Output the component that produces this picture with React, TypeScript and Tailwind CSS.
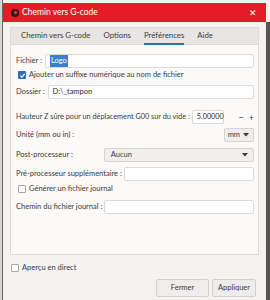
import React from 'react';

const Box = ({ className = '', children }: { className?: string; children?: React.ReactNode }) => (
  <div className={`h-[14px] bg-white border border-[#dcdad8] rounded-[2px] flex items-center px-[4px] ${className}`}>
    {children}
  </div>
);

const Check = ({ checked }: { checked?: boolean }) =>
  checked ? (
    <span className="w-[8px] h-[8px] rounded-[1px] bg-[#2f6fbf] flex items-center justify-center shrink-0">
      <svg width="7" height="7" viewBox="0 0 10 10">
        <path d="M2 5.2 L4.2 7.4 L8.2 2.8" stroke="white" strokeWidth="1.6" fill="none" />
      </svg>
    </span>
  ) : (
    <span className="w-[8px] h-[8px] rounded-[1px] bg-white border border-[#a9a7a5] shrink-0" />
  );

const Arrow = () => (
  <svg width="6" height="4" viewBox="0 0 6 4">
    <path d="M0 0 L6 0 L3 3.5 Z" fill="#3c3c3c" />
  </svg>
);

export default function App() {
  return (
    <div
      className="w-[270px] h-[300px] overflow-hidden flex bg-[#f4f2f0] text-[#3a3a3a] text-[7.5px] whitespace-nowrap"
      style={{ fontFamily: 'Lato, "Noto Sans", sans-serif' }}
    >
      <div className="w-[3px] h-full bg-[#d8d4d0] border-r border-[#6b6460]" />
      <div className="w-[263px] h-full flex flex-col mt-[3px] bg-[#f5f3f1]">
        {/* title bar */}
        <div className="h-[19px] bg-[#e61b27] flex items-center pl-[8px] pr-[9px] text-white">
          <span className="w-[8px] h-[8px] rounded-full bg-[#2a1a1a] flex items-center justify-center mr-[3px]">
            <span className="w-[3px] h-[3px] bg-[#e04040] rotate-45" />
          </span>
          <span className="text-[8.5px]">Chemin vers G-code</span>
          <span className="ml-auto text-[9px] leading-none font-light">✕</span>
        </div>

        <div className="px-[7px] pt-[5px] flex flex-col flex-1">
          {/* tabs */}
          <div className="h-[17px] bg-[#e8e6e4] flex items-center pl-[10px] gap-[13px] text-[7.8px] border-t border-x border-[#dedcda]">
            <span>Chemin vers G-code</span>
            <span>Options</span>
            <span className="relative text-[#3a3a3a]">
              Préférences
              <span className="absolute left-0 right-0 -bottom-[3px] h-[1.5px] bg-[#2f6fbf]" />
            </span>
            <span>Aide</span>
          </div>

          {/* panel */}
          <div className="h-[211px] bg-[#fbfaf9] border border-[#dcdad8] pl-[5px] pr-[4px] pt-[9px] flex flex-col">
            <div className="flex items-center gap-[3px] h-[14px]">
              <span>Fichier :</span>
              <Box className="flex-1 border-[#4a90c8]">
                <span className="bg-[#3a7fd0] text-white px-[1px]">Logo</span>
              </Box>
            </div>
            <div className="flex items-center gap-[3px] h-[14px] pl-[2px]">
              <Check checked />
              <span>Ajouter un suffixe numérique au nom de fichier</span>
            </div>
            <div className="flex items-center gap-[3px] h-[14px] mt-[3px]">
              <span>Dossier :</span>
              <Box className="flex-1">
                <span className="text-[#2a2a2a]">D:\_tampon</span>
              </Box>
            </div>
            <div className="flex items-center h-[14px] mt-[11px] text-[7.3px]">
              <span>Hauteur Z sûre pour un déplacement G00 sur du vide :</span>
              <Box className="ml-[2px] w-[32px] px-[2px]">
                <span className="text-[#2a2a2a]">5.00000</span>
              </Box>
              <span className="ml-auto text-[9px] leading-none mr-[3px]">−</span>
              <span className="ml-[2px] text-[9px] leading-none">+</span>
            </div>
            <div className="flex items-center h-[14px] mt-[4px]">
              <span>Unité (mm ou in) :</span>
              <div className="ml-auto h-[14px] w-[30px] bg-[#f1efed] border border-[#d6d4d2] rounded-[2px] flex items-center justify-end gap-[3px] pr-[4px]">
                <span>mm</span>
                <Arrow />
              </div>
            </div>
            <div className="flex items-center h-[14px] mt-[6px]">
              <span>Post-processeur :</span>
              <div className="ml-[31px] flex-1 h-[14px] bg-[#f1efed] border border-[#d6d4d2] rounded-[2px] flex items-center pl-[6px] pr-[5px]">
                <span>Aucun</span>
                <span className="ml-auto">
                  <Arrow />
                </span>
              </div>
            </div>
            <div className="flex items-center h-[14px] mt-[5px]">
              <span>Pré-processeur supplémentaire :</span>
              <Box className="ml-[2px] flex-1" />
            </div>
            <div className="flex items-center gap-[3px] h-[14px] pl-[2px] mt-[1px]">
              <Check />
              <span>Générer un fichier journal</span>
            </div>
            <div className="flex items-center h-[14px] mt-[4px]">
              <span>Chemin du fichier journal :</span>
              <Box className="ml-[2px] flex-1" />
            </div>
          </div>

          {/* footer */}
          <div className="flex items-center gap-[3px] h-[14px] mt-[6px] pl-[1px]">
            <Check />
            <span>Aperçu en direct</span>
          </div>
          <div className="flex justify-end gap-[3px] mt-[4px] pr-[3px]">
            <div className="w-[53px] h-[18px] bg-[#efedeb] border border-[#d2d0ce] rounded-[2px] flex items-center justify-center">
              Fermer
            </div>
            <div className="w-[44px] h-[18px] bg-[#efedeb] border border-[#d2d0ce] rounded-[2px] flex items-center justify-center">
              Appliquer
            </div>
          </div>
        </div>
      </div>
      <div className="w-[4px] h-full mt-[22px] bg-[#5a5452]" />
    </div>
  );
}
